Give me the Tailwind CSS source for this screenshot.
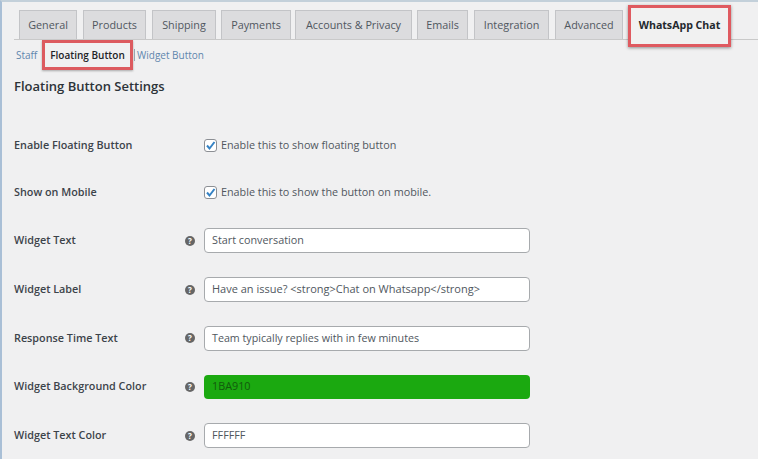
<!DOCTYPE html>
<html><head><meta charset="utf-8">
<script src="https://cdn.jsdelivr.net/npm/@tailwindcss/browser@4"></script>
</head>
<body class="m-0 overflow-hidden">
<div class="w-[758px] h-[459px] overflow-hidden bg-[#f0f0f1] border-t-2 border-t-[#c3d0da] border-l-2 border-l-[#a9bfd6] font-['Open_Sans',sans-serif] text-[#3c434a]">
  <div class="relative flex items-end h-[38px] ml-[12px] pl-[5px] border-b border-[#c9c9c9] text-[10.8px] font-medium text-[#50575e]">
    <div class="w-[58px] h-[29px] pt-[1px] flex items-center justify-center bg-[#dcdcde] border border-b-0 border-[#c3c4c7]">General</div>
    <div class="ml-[6px] w-[63px] h-[29px] pt-[1px] flex items-center justify-center bg-[#dcdcde] border border-b-0 border-[#c3c4c7]">Products</div>
    <div class="ml-[6px] w-[64px] h-[29px] pt-[1px] flex items-center justify-center bg-[#dcdcde] border border-b-0 border-[#c3c4c7]">Shipping</div>
    <div class="ml-[5px] w-[70px] h-[29px] pt-[1px] flex items-center justify-center bg-[#dcdcde] border border-b-0 border-[#c3c4c7]">Payments</div>
    <div class="ml-[4px] w-[117px] h-[29px] pt-[1px] flex items-center justify-center bg-[#dcdcde] border border-b-0 border-[#c3c4c7]">Accounts &amp; Privacy</div>
    <div class="ml-[5px] w-[51px] h-[29px] pt-[1px] flex items-center justify-center bg-[#dcdcde] border border-b-0 border-[#c3c4c7]">Emails</div>
    <div class="ml-[6px] w-[75px] h-[29px] pt-[1px] flex items-center justify-center bg-[#dcdcde] border border-b-0 border-[#c3c4c7]">Integration</div>
    <div class="ml-[6px] w-[68px] h-[29px] pt-[1px] flex items-center justify-center bg-[#dcdcde] border border-b-0 border-[#c3c4c7]">Advanced</div>
    <div class="absolute left-[614px] top-[3px] w-[103px] h-[42px] flex items-center justify-center bg-[#f1f1f1] border-[3px] border-[#df5a60] shadow-[0_1px_3px_rgba(0,0,0,0.4)] font-bold text-[#23282d] text-[10.6px]">WhatsApp Chat</div>
  </div>
  <div class="flex items-center h-[30px] pl-[14px] text-[10px] text-[#5f86ad]">
    <span class="w-[26px]">Staff</span>
    <div class="w-[91px] h-[30px] flex items-center justify-center border-[3px] border-[#dc5a5f] shadow-[0_1px_2px_rgba(0,0,0,0.3)] font-semibold text-[#1d2327]">Floating Button</div>
    <span class="w-[1px] h-[12px] ml-[1px] bg-[#9aa5ae]"></span>
    <span class="ml-[2px]">Widget Button</span>
  </div>
  <h2 class="mt-[6px] ml-[12px] h-[20px] leading-[20px] text-[13px] font-semibold text-[#2c3338]">Floating Button Settings</h2>
  <div class="mt-[26px] ml-[12px] text-[10.8px]">
    <div class="flex items-center h-[47px]">
      <div class="w-[190px] font-semibold">Enable Floating Button</div>
      <span class="w-[13px] h-[13px] flex items-center justify-center bg-white border border-[#8c8f94] rounded-[3px]"><svg width="11" height="11" viewBox="0 0 11 11"><path d="M2 5.5 L4.5 8.5 L9.5 2" fill="none" stroke="#3582c4" stroke-width="2"/></svg></span>
      <span class="ml-[4px] text-[#50575e]">Enable this to show floating button</span>
    </div>
    <div class="flex items-center h-[47px]">
      <div class="w-[190px] font-semibold">Show on Mobile</div>
      <span class="w-[13px] h-[13px] flex items-center justify-center bg-white border border-[#8c8f94] rounded-[3px]"><svg width="11" height="11" viewBox="0 0 11 11"><path d="M2 5.5 L4.5 8.5 L9.5 2" fill="none" stroke="#3582c4" stroke-width="2"/></svg></span>
      <span class="ml-[4px] text-[#50575e]">Enable this to show the button on mobile.</span>
    </div>
    <div class="flex items-center h-[49px]">
      <div class="w-[171px] font-semibold">Widget Text</div>
      <span class="w-[10px] h-[10px] flex items-center justify-center rounded-full bg-[#666] text-white text-[8px] font-bold leading-none">?</span>
      <div class="ml-[9px] w-[326px] h-[25px] flex items-center px-[7px] bg-white border border-[#a7aaad] rounded-[4px] text-[#50575e]">Start conversation</div>
    </div>
    <div class="flex items-center h-[49px]">
      <div class="w-[171px] font-semibold">Widget Label</div>
      <span class="w-[10px] h-[10px] flex items-center justify-center rounded-full bg-[#666] text-white text-[8px] font-bold leading-none">?</span>
      <div class="ml-[9px] w-[326px] h-[25px] flex items-center px-[7px] bg-white border border-[#a7aaad] rounded-[4px] text-[#50575e] text-[11px]">Have an issue? &lt;strong&gt;Chat on Whatsapp&lt;/strong&gt;</div>
    </div>
    <div class="flex items-center h-[48px]">
      <div class="w-[171px] font-semibold">Response Time Text</div>
      <span class="w-[10px] h-[10px] flex items-center justify-center rounded-full bg-[#666] text-white text-[8px] font-bold leading-none">?</span>
      <div class="ml-[9px] w-[326px] h-[25px] flex items-center px-[7px] bg-white border border-[#a7aaad] rounded-[4px] text-[#50575e] text-[10.7px]">Team typically replies with in few minutes</div>
    </div>
    <div class="flex items-center h-[49px]">
      <div class="w-[171px] font-semibold">Widget Background Color</div>
      <span class="w-[10px] h-[10px] flex items-center justify-center rounded-full bg-[#666] text-white text-[8px] font-bold leading-none">?</span>
      <div class="ml-[9px] w-[326px] h-[24px] flex items-center px-[8px] bg-[#1ba910] rounded-[4px] text-[#12590d]">1BA910</div>
    </div>
    <div class="flex items-center h-[49px]">
      <div class="w-[171px] font-semibold">Widget Text Color</div>
      <span class="w-[10px] h-[10px] flex items-center justify-center rounded-full bg-[#666] text-white text-[8px] font-bold leading-none">?</span>
      <div class="ml-[9px] w-[326px] h-[25px] flex items-center px-[7px] bg-white border border-[#a7aaad] rounded-[4px] text-[#50575e]">FFFFFF</div>
    </div>
  </div>
</div>
</body></html>
